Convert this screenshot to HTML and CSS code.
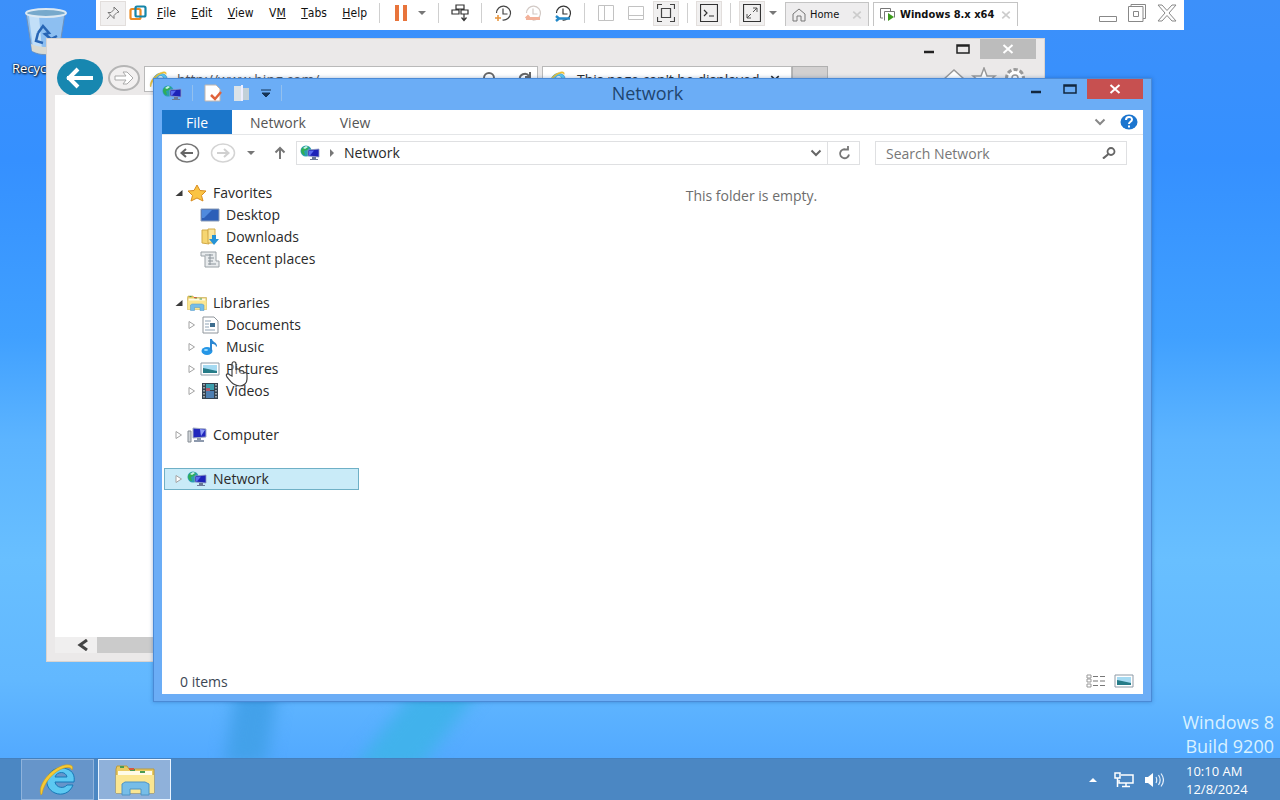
FILE: index.html
```html
<!DOCTYPE html>
<html lang="en">
<head>
    <meta charset="UTF-8">
    <meta name="viewport" content="width=device-width, initial-scale=1.0">
    <title>Windows 8.x x64</title>
    <link rel="stylesheet" href="styles.css">
</head>
<body>
    <!-- Shared icons -->
    <svg class="sprite" aria-hidden="true">
        <symbol id="i-network" viewBox="0 0 20 16">
            <circle cx="6" cy="6" r="5.5" fill="#2a9fb0"/>
            <path d="M1 5c2-4 5-4 8-3L7 5 4 6l1 4C3 10 1 8 1 5z" fill="#2fae57"/>
            <path d="M3 3l3-2 2 1-3 2z" fill="#c9f2ee"/>
            <path d="M8 5l11-1v8l-11-1z" fill="#1d22b8" stroke="#8f9cc0" stroke-width=".8"/>
            <path d="M9 6l5-.5-4 5H9z" fill="#5b6cf0"/>
            <path d="M12 12h4v2h2v1h-8v-1h2z" fill="#6a7896"/>
        </symbol>
        <symbol id="i-ie" viewBox="0 0 40 34">
            <path d="M36 19H17c1 6 9 7 12 3h6c-3 8-11 11-18 8S7 20 10 13 22 3 29 6c6 2 8 7 7 13zM17 14h12c-1-6-10-6-12 0z" fill="#5cc8f2" stroke="#1779b8" stroke-width="1"/>
            <path d="M3 32C-1 22 13 5 27 2c6-1 9 1 7 5-1-3-4-3-8-2C16 8 6 19 4 31z" fill="#f6ca35" stroke="#c99a1a" stroke-width=".6"/>
        </symbol>
        <symbol id="i-folders" viewBox="0 0 40 32">
            <path d="M1 5l1-3h10l2 3h25v24H1z" fill="#eacb62" stroke="#bb9a3c"/>
            <path d="M3 7h34v5H3z" fill="#fffbe6"/>
            <path d="M5 3h4M15 6h5M25 8h5" stroke="#4c9a52" stroke-width="2"/>
            <path d="M14 5h5" stroke="#d9583c" stroke-width="2"/>
            <path d="M1 11h38v18H1z" fill="#fbe691"/>
            <path d="M7 31V20l3-2h20l4 2v11h-8v-6H15v6z" fill="#76bde8" stroke="#4f94c4"/>
        </symbol>
        <symbol id="i-picture" viewBox="0 0 20 16">
            <path d="M1 2h18v12H1z" fill="#fff" stroke="#8d9aa6"/>
            <path d="M3 4h14v8H3z" fill="#a5daf2"/>
            <path d="M3 7l5 1 9 2v2H3z" fill="#267c88"/>
        </symbol>
        <symbol id="i-caret" viewBox="0 0 10 6"><path d="M1 1h8L5 5z" fill="currentColor"/></symbol>
        <symbol id="i-chevron" viewBox="0 0 12 8"><path d="M1.500 1.500L6 6l4.500-4.500" fill="none" stroke="currentColor" stroke-width="2"/></symbol>
        <symbol id="i-close" viewBox="0 0 12 10"><path d="M1.500 1l9 8M10.500 1l-9 8" fill="none" stroke="currentColor" stroke-width="2"/></symbol>
        <symbol id="i-max" viewBox="0 0 14 10"><path d="M1 1h12v8H1zM1 2h12" fill="none" stroke="currentColor" stroke-width="1.500"/></symbol>
        <symbol id="i-min" viewBox="0 0 14 10"><path d="M2 8h10" stroke="currentColor" stroke-width="2.500"/></symbol>
        <symbol id="i-clock" viewBox="0 0 18 18"><path d="M2.500 9a7 7 0 1 1 6 7M9 4.500V10h4.500" fill="none" stroke="currentColor" stroke-width="1.200"/></symbol>
        <symbol id="i-closed" viewBox="0 0 8 10"><path d="M1 1.500v7L6.500 5z" fill="#fff" stroke="#a3a3a3"/></symbol>
        <symbol id="i-open" viewBox="0 0 8 8"><path d="M7.500 1v6H.5z" fill="#3b3b3b"/></symbol>
    </svg>

    <div class="desktop">
        <svg class="wallpaper" viewBox="0 0 1280 800" preserveAspectRatio="none" aria-hidden="true">
            <path d="M236 690h42l-12 75h-42z" fill="#43a1ea"/>
            <path d="M414 690h66l-62 80h-66z" fill="#41b2ec"/>
        </svg>

        <div class="desktop-icon">
            <svg width="44" height="50" viewBox="0 0 44 50">
                <path d="M2 6l6 38c7 5 20 5 27 0l6-38z" fill="#9cc8ee" fill-opacity=".85" stroke="#7192b8"/>
                <path d="M5 9h10l3 34-9-2z" fill="#d8edfb" fill-opacity=".7"/>
                <ellipse cx="22" cy="6" rx="20" ry="4" fill="#77a9cc" stroke="#dce9f3" stroke-width="2"/>
                <path d="M14 26l5-7 6 7-4 1 6 5 6-3M14 26l-2 8 7 2" fill="none" stroke="#2765b5" stroke-width="2.500"/>
                <path d="M7 37c9 4 19 4 28 0l-1 7c-8 4-18 4-26 0z" fill="#d9dad2"/>
            </svg>
            <span>Recycle Bin</span>
        </div>

        <!-- Internet Explorer, behind -->
        <section class="ie-window">
            <div class="window-controls ie-controls">
                <button type="button" class="win-btn" aria-label="Minimize"><svg width="14" height="10"><use href="#i-min"/></svg></button>
                <button type="button" class="win-btn" aria-label="Maximize"><svg width="14" height="10"><use href="#i-max"/></svg></button>
                <button type="button" class="win-btn win-close" aria-label="Close"><svg width="12" height="10"><use href="#i-close"/></svg></button>
            </div>
            <div class="ie-bar">
                <button type="button" class="ie-back" aria-label="Back"><svg width="30" height="24" viewBox="0 0 30 24"><path d="M2 12h26M13 3L4 12l9 9" fill="none" stroke="#fff" stroke-width="4"/></svg></button>
                <button type="button" class="ie-forward" aria-label="Forward"><svg width="34" height="28" viewBox="0 0 34 28"><ellipse cx="17" cy="14" rx="15" ry="12" fill="#f2f0f0" stroke="#b5b5b5" stroke-width="2"/><path d="M8 12h11l-3-4h4l6 6-6 6h-4l3-4H8z" fill="#fff" stroke="#aaa"/></svg></button>
                <div class="ie-address">
                    <svg width="20" height="17"><use href="#i-ie"/></svg>
                    <input type="text" value="http://www.bing.com/" aria-label="Address">
                    <svg width="16" height="16" viewBox="0 0 16 16"><circle cx="8" cy="7" r="5" fill="none" stroke="#666" stroke-width="2"/></svg>
                    <svg width="16" height="16" viewBox="0 0 16 16"><path d="M3 9a5 5 0 0 1 9-4M13 1v5H8" fill="none" stroke="#666" stroke-width="2"/></svg>
                </div>
                <div class="ie-tab"><svg width="20" height="17"><use href="#i-ie"/></svg><span>This page can't be displayed</span><svg width="10" height="9"><use href="#i-close"/></svg></div>
                <button type="button" class="ie-newtab" aria-label="New tab"></button>
                <svg class="ie-tools" width="84" height="24" viewBox="0 0 84 24" fill="#fff" stroke="#999" stroke-width="1.500">
                    <path d="M2 12L12 3l10 9h-3v9H5v-9z"/>
                    <path d="M42 1l3 8h8l-6 5 2 8-7-5-7 5 2-8-6-5h8z"/>
                    <circle cx="73" cy="11" r="8" stroke-dasharray="4 2" stroke-width="4"/><circle cx="73" cy="11" r="7" stroke="none"/><circle cx="73" cy="11" r="3"/>
                </svg>
            </div>
            <div class="ie-page"></div>
            <div class="ie-scroll"><svg width="12" height="12" viewBox="0 0 12 12"><path d="M10 1L3 6l7 5" fill="none" stroke="#444" stroke-width="3"/></svg><span class="ie-thumb"></span></div>
        </section>

        <!-- File Explorer -->
        <section class="explorer">
            <header class="titlebar">
                <div class="quick">
                    <svg width="20" height="16"><use href="#i-network"/></svg>
                    <span class="bar"></span>
                    <button type="button" aria-label="Properties"><svg width="20" height="18" viewBox="0 0 20 18"><path d="M2 1h11l4 4v12H2z" fill="#fff" stroke="#c4b7ad"/><path d="M8 11l4 4 6-7" fill="none" stroke="#e0633c" stroke-width="2.500"/></svg></button>
                    <button type="button" aria-label="New folder"><svg width="18" height="18" viewBox="0 0 18 18"><path d="M1 2h8v15H1z" fill="#dbe3e8"/><path d="M9 4h7v12H9z" fill="#c2d0d8"/><path d="M9 1v16" stroke="#eef" stroke-width="2"/></svg></button>
                    <button type="button" aria-label="Customize"><svg width="10" height="8" viewBox="0 0 10 8"><path d="M0 1h10M1 4h8L5 8z" fill="#173456" stroke="#173456"/></svg></button>
                    <span class="bar"></span>
                </div>
                <h1>Network</h1>
                <div class="window-controls">
                    <button type="button" class="win-btn" aria-label="Minimize"><svg width="14" height="10"><use href="#i-min"/></svg></button>
                    <button type="button" class="win-btn" aria-label="Maximize"><svg width="14" height="10"><use href="#i-max"/></svg></button>
                    <button type="button" class="win-btn win-close" aria-label="Close"><svg width="12" height="10"><use href="#i-close"/></svg></button>
                </div>
            </header>

            <div class="client">
                <div class="ribbon">
                    <button type="button" class="ribbon-file">File</button>
                    <button type="button" class="ribbon-tab">Network</button>
                    <button type="button" class="ribbon-tab">View</button>
                    <button type="button" class="ribbon-expand" aria-label="Expand the ribbon"><svg width="12" height="8"><use href="#i-chevron"/></svg></button>
                    <button type="button" aria-label="Help"><svg width="18" height="16" viewBox="0 0 18 16"><ellipse cx="9" cy="8" rx="8.500" ry="7.500" fill="#1b75cf"/><path d="M6 6c0-4 6-4 6-.5C12 8 9 7.500 9 10M9 11.500v2" fill="none" stroke="#fff" stroke-width="2"/></svg></button>
                </div>

                <div class="address-row">
                    <button type="button" aria-label="Back"><svg width="26" height="20" viewBox="0 0 26 20"><ellipse cx="13" cy="10" rx="11.500" ry="9" fill="none" stroke="#777" stroke-width="1.500"/><path d="M7 10h12M12 6l-4.500 4 4.500 4" fill="none" stroke="#666" stroke-width="2"/></svg></button>
                    <button type="button" aria-label="Forward"><svg width="26" height="20" viewBox="0 0 26 20"><ellipse cx="13" cy="10" rx="11.500" ry="9" fill="none" stroke="#d4d4d4" stroke-width="1.500"/><path d="M7 10h12M14 6l4.500 4-4.500 4" fill="none" stroke="#d0d0d0" stroke-width="2"/></svg></button>
                    <button type="button" class="recent" aria-label="Recent locations"><svg width="10" height="6"><use href="#i-caret"/></svg></button>
                    <button type="button" class="up" aria-label="Up"><svg width="12" height="14" viewBox="0 0 12 14"><path d="M6 13V2M1.500 6.500L6 2l4.500 4.500" fill="none" stroke="#777" stroke-width="2"/></svg></button>
                    <div class="address">
                        <svg width="20" height="16"><use href="#i-network"/></svg>
                        <svg width="6" height="8" viewBox="0 0 6 8"><path d="M1 0v8l4-4z" fill="#777"/></svg>
                        <span class="crumb">Network</span>
                        <button type="button" aria-label="Previous locations"><svg width="12" height="8"><use href="#i-chevron"/></svg></button>
                        <button type="button" class="refresh" aria-label="Refresh"><svg width="14" height="14" viewBox="0 0 14 14"><path d="M9 3.500a4.500 4.500 0 1 0 3 5M6 3.500h5V0" fill="none" stroke="#777" stroke-width="1.800"/></svg></button>
                    </div>
                    <label class="search">
                        <input type="search" placeholder="Search Network" aria-label="Search Network">
                        <svg width="14" height="12" viewBox="0 0 14 12"><circle cx="9" cy="4.500" r="3.500" fill="none" stroke="#666" stroke-width="1.800"/><path d="M6.500 7L1 11.500" stroke="#666" stroke-width="2.200"/></svg>
                    </label>
                </div>

                <div class="panes">
                    <nav class="tree">
                        <ul>
                            <li><svg class="twist" width="8" height="8"><use href="#i-open"/></svg><svg width="20" height="18" viewBox="0 0 20 18"><path d="M10 1l3 5.500 6 .5-4.500 4.500L16 17l-6-3-6 3 1.500-5.500L1 7l6-.5z" fill="#fbc444" stroke="#d98d22"/></svg><a href="#">Favorites</a></li>
                            <li class="child"><svg width="20" height="16" viewBox="0 0 20 16"><path d="M1 2h18v12H1z" fill="#2c5fb8" stroke="#8b9db8"/><path d="M2 3h10l-8 8H2z" fill="#4f8add"/></svg><a href="#">Desktop</a></li>
                            <li class="child"><svg width="20" height="18" viewBox="0 0 20 18"><path d="M2 2h6l1 14-7-1z" fill="#f6d672" stroke="#d2aa48"/><path d="M8 1h7v14H8z" fill="#fbe59b" stroke="#d2aa48"/><path d="M12 7h4v4h3l-5 6-5-6h3z" fill="#2693d6"/></svg><a href="#">Downloads</a></li>
                            <li class="child"><svg width="20" height="18" viewBox="0 0 20 18"><path d="M1 2h15v9h3v6H5V6H1z" fill="#e8ebed" stroke="#9aa1a6"/><path d="M5 5h8M8 8h6M8 11h5M8 14h8M10 4v11" stroke="#8b949b"/></svg><a href="#">Recent places</a></li>
                        </ul>
                        <ul>
                            <li><svg class="twist" width="8" height="8"><use href="#i-open"/></svg><svg width="20" height="16"><use href="#i-folders"/></svg><a href="#">Libraries</a></li>
                            <li class="child"><svg class="twist" width="8" height="10"><use href="#i-closed"/></svg><svg width="20" height="18" viewBox="0 0 20 18"><path d="M3 1h11l4 4v12H3z" fill="#fff" stroke="#8f959b"/><path d="M5 5h6M5 8h4M5 11h4M5 14h10" stroke="#8fa3b5"/><path d="M10 7h5v4h-5z" fill="#3d6d8e"/></svg><a href="#">Documents</a></li>
                            <li class="child"><svg class="twist" width="8" height="10"><use href="#i-closed"/></svg><svg width="20" height="18" viewBox="0 0 20 18"><ellipse cx="7" cy="13" rx="5.500" ry="4" fill="#2596e6"/><path d="M10 13V1h2c0 3 5 3 5 7l-1 1c0-3-3-3-4-3v7z" fill="#2a86d2"/><ellipse cx="6" cy="12" rx="2" ry="1" fill="#9bdcff"/></svg><a href="#">Music</a></li>
                            <li class="child"><svg class="twist" width="8" height="10"><use href="#i-closed"/></svg><svg width="20" height="16"><use href="#i-picture"/></svg><a href="#">Pictures</a></li>
                            <li class="child"><svg class="twist" width="8" height="10"><use href="#i-closed"/></svg><svg width="20" height="18" viewBox="0 0 20 18"><path d="M2 1h16v16H2z" fill="#34424f"/><path d="M6 2h8v6H6z" fill="#3d9fae"/><path d="M6 9h8v7H6z" fill="#4e7fb2"/><path d="M6 6h4v3H6z" fill="#b05a68"/><path d="M4 2v14M16 2v14" stroke="#bcc6cd" stroke-width="1.500" stroke-dasharray="1.500 1.500"/></svg><a href="#">Videos</a></li>
                        </ul>
                        <ul>
                            <li><svg class="twist" width="8" height="10"><use href="#i-closed"/></svg><svg width="20" height="16" viewBox="0 0 20 16"><path d="M1 4h3v11H1z" fill="#d0d4d8" stroke="#868d94"/><path d="M6 1l13 1v8l-13 1z" fill="#2228bd" stroke="#a3adc4"/><path d="M13 2l5 1-4 6z" fill="#8c9cf5"/><path d="M10 11h4v2h3v2H7v-2h3z" fill="#8d99ad"/></svg><a href="#">Computer</a></li>
                        </ul>
                        <ul>
                            <li class="selected"><svg class="twist" width="8" height="10"><use href="#i-closed"/></svg><svg width="20" height="16"><use href="#i-network"/></svg><a href="#">Network</a></li>
                        </ul>
                    </nav>
                    <main class="files"><p>This folder is empty.</p></main>
                </div>

                <footer class="status">
                    <span>0 items</span>
                    <button type="button" aria-label="Details view"><svg width="20" height="14" viewBox="0 0 20 14"><path d="M1 1h4v3H1zM1 5h4v3H1zM1 10h4v3H1z" fill="none" stroke="#999"/><path d="M7 2.500h5M14 2.500h5M7 7h5M14 7h5M7 11.500h5M14 11.500h5" stroke="#777"/></svg></button>
                    <button type="button" aria-label="Large icons view"><svg width="20" height="16"><use href="#i-picture"/></svg></button>
                </footer>
            </div>
        </section>

        <!-- Virtual machine toolbar -->
        <header class="vm-bar">
            <button type="button" class="tool framed" aria-label="Pin"><svg width="14" height="14" viewBox="0 0 14 14"><path d="M8 1l5 5-2 .5-3 3v3L2 6.500h3l3-3zM4.500 9L1 13" fill="none" stroke="#777"/></svg></button>
            <svg class="vm-logo" width="18" height="16" viewBox="0 0 18 16" fill="none" stroke-width="2.200"><rect x="1.500" y="4" width="10" height="10" rx="1.500" stroke="#ed8b22"/><rect x="6.500" y="1.500" width="10" height="10" rx="1.500" stroke="#1585a8"/></svg>
            <nav class="menu">
                <button type="button"><u>F</u>ile</button>
                <button type="button"><u>E</u>dit</button>
                <button type="button"><u>V</u>iew</button>
                <button type="button">V<u>M</u></button>
                <button type="button"><u>T</u>abs</button>
                <button type="button"><u>H</u>elp</button>
            </nav>
            <span class="sep"></span>
            <div class="tools">
                <button type="button" class="tool" aria-label="Suspend"><svg width="14" height="16" viewBox="0 0 14 16"><path d="M1 0h4v16H1zM9 0h4v16H9z" fill="#e8743b"/></svg></button>
                <button type="button" class="drop" aria-label="Power options"><svg width="10" height="6"><use href="#i-caret"/></svg></button>
            </div>
            <span class="sep"></span>
            <button type="button" class="tool" aria-label="Send Ctrl+Alt+Del"><svg width="18" height="18" viewBox="0 0 18 18"><path d="M5 1h8v4H5zM1 6h7v4H1zM10 6h7v4h-7zM13 10v6M10.500 13.500L13 16.500l2.500-3" fill="none" stroke="#333" stroke-width="1.200"/></svg></button>
            <span class="sep"></span>
            <div class="tools">
                <button type="button" class="tool" aria-label="Take snapshot"><svg width="18" height="18" viewBox="0 0 18 18" color="#444"><use href="#i-clock"/><path d="M4 11v6M1 14h6" stroke="#e8943b" stroke-width="1.500"/></svg></button>
                <button type="button" class="tool" aria-label="Revert snapshot"><svg width="18" height="18" viewBox="0 0 18 18" color="#d2c9c5"><use href="#i-clock"/><path d="M2 14.500h14M5 11.500l-3 3" stroke="#f3b29a" stroke-width="3"/></svg></button>
                <button type="button" class="tool" aria-label="Manage snapshots"><svg width="18" height="18" viewBox="0 0 18 18" color="#333"><use href="#i-clock"/><path d="M2 12l3 2.500h11M2 17l3-2.500" fill="none" stroke="#2489c9" stroke-width="2.500"/></svg></button>
            </div>
            <span class="sep"></span>
            <div class="tools">
                <button type="button" class="tool" aria-label="Show library"><svg width="16" height="16" viewBox="0 0 16 16"><path d="M.5.5h15v15H.5zM6.500 1v14" fill="none" stroke="#c2c2c2"/></svg></button>
                <button type="button" class="tool" aria-label="Show thumbnails"><svg width="16" height="16" viewBox="0 0 16 16"><path d="M.5 1.500h15v13H.5zM1 10.500h14" fill="none" stroke="#c2c2c2"/></svg></button>
                <button type="button" class="tool framed" aria-label="Full screen"><svg width="18" height="18" viewBox="0 0 18 18"><path d="M.5 5V.5H5M13 .5h4.500V5M17.500 13v4.500H13M5 17.500H.5V13M4.500 4.500h9v9h-9z" fill="none" stroke="#444" stroke-width="1.200"/></svg></button>
            </div>
            <span class="sep"></span>
            <button type="button" class="tool framed" aria-label="Console view"><svg width="18" height="18" viewBox="0 0 18 18"><path d="M.5.5h17v17H.5zM4 6l3 3-3 3M9 12h5" fill="none" stroke="#333" stroke-width="1.200"/></svg></button>
            <span class="sep"></span>
            <div class="tools">
                <button type="button" class="tool framed" aria-label="Stretch guest"><svg width="18" height="18" viewBox="0 0 18 18"><path d="M.5.5h17v17H.5z" fill="none" stroke="#333" stroke-width="1.200"/><path d="M4 14l4-4M10 8l4-4M10 4h4v4M4 10v4h4" fill="none" stroke="#555"/></svg></button>
                <button type="button" class="drop" aria-label="Stretch options"><svg width="10" height="6"><use href="#i-caret"/></svg></button>
            </div>
            <div class="vm-tabs">
                <div class="vm-tab vm-home"><svg width="14" height="14" viewBox="0 0 14 14"><path d="M1 6l6-5 6 5v7H9V8H5v5H1z" fill="none" stroke="#777"/></svg><a href="#">Home</a><svg class="tab-x" width="10" height="10"><use href="#i-close"/></svg></div>
                <div class="vm-tab vm-active"><svg width="16" height="14" viewBox="0 0 16 14"><path d="M3 10H.5V.5h10V3M4.500 12.500v-9h10v6" fill="none" stroke="#777"/><path d="M8 5v8l6-4z" fill="#3c9a1c"/></svg><a href="#">Windows 8.x x64</a><svg class="tab-x" width="10" height="10"><use href="#i-close"/></svg></div>
            </div>
            <div class="vm-controls">
                <button type="button" aria-label="Minimize"><svg width="18" height="18" viewBox="0 0 18 18"><path d="M.5 12.500h17v5H.5z" fill="#fff" stroke="#888"/></svg></button>
                <button type="button" aria-label="Restore"><svg width="18" height="18" viewBox="0 0 18 18"><path d="M3 2.500V.5h14.500v14H15M.5 2.500H15v15H.5zM5.500 7.500h5v5h-5z" fill="none" stroke="#888"/></svg></button>
                <button type="button" aria-label="Close"><svg width="20" height="18" viewBox="0 0 20 18"><path d="M1 1h4l5 5.500L15 1h4l-7 8 7 8h-4l-5-5.500L5 17H1l7-8z" fill="#fff" stroke="#888"/></svg></button>
            </div>
        </header>

        <p class="watermark">Windows 8<br>Build 9200</p>

        <footer class="taskbar">
            <button type="button" class="task" aria-label="Internet Explorer"><svg width="40" height="34"><use href="#i-ie"/></svg></button>
            <button type="button" class="task task-active" aria-label="File Explorer"><svg width="42" height="32"><use href="#i-folders"/></svg></button>
            <div class="tray">
                <svg class="tray-more" width="10" height="6" viewBox="0 0 10 6"><path d="M1 5h8L5 1z" fill="#fff"/></svg>
                <svg width="20" height="16" viewBox="0 0 20 16" fill="none" stroke="#fff" stroke-width="1.500"><path d="M7 3h12v8H5V8M12 11v3M8 14.500h8"/><path d="M1 1h5v5H1zM3.500 6v9"/></svg>
                <svg width="20" height="16" viewBox="0 0 20 16"><path d="M1 5h3l5-4v14l-5-4H1z" fill="#fff"/><path d="M12 5c1 2 1 4 0 6M14.500 3c2 3 2 7 0 10M17 1.500c3 4 3 9 0 13" fill="none" stroke="#e3eefa" stroke-width="1.200"/></svg>
            </div>
            <p class="clock">10:10 AM<br>12/8/2024</p>
        </footer>

        <svg class="cursor" width="24" height="28" viewBox="0 0 24 28" aria-hidden="true"><path d="M7 16V4c0-3 4-3 4 0v6c1-2 4-1 4 1 2-1 4 0 4 2 2-1 3 0 3 2v4c0 4-3 7-7 7-6 0-8-3-13-9-2-3 1-4 3-2z" fill="#fff" fill-opacity=".4" stroke="#444" stroke-width="1.200"/></svg>
    </div>
</body>
</html>
```

FILE: styles.css
```css
* {
    box-sizing: border-box;
}

body {
    margin: 0;
    font-family: "Open Sans", "Noto Sans", sans-serif;
    font-size: 14px;
    color: #2a2a2a;
}

button {
    display: flex;
    align-items: center;
    justify-content: center;
    padding: 0;
    border: none;
    background: none;
    font: inherit;
    color: inherit;
}

svg {
    display: block;
    flex: none;
}

a {
    color: inherit;
    text-decoration: none;
}

p,
h1,
ul {
    margin: 0;
    padding: 0;
    font-weight: normal;
}

.sprite {
    position: absolute;
    width: 0;
    height: 0;
}

.desktop {
    position: relative;
    height: 100vh;
    overflow: hidden;
    background: linear-gradient(#3c90fa 0%, #3590ff 20%, #40a0ff 42%, #5cb4ff 55%, #68bfff 70%, #62b8ff 85%, #52a9ff 95%);
}

.wallpaper {
    position: absolute;
    width: 100%;
    height: 100%;
    filter: blur(8px);
}

.desktop-icon {
    position: absolute;
    top: 7px;
    left: 8px;
    width: 76px;
    display: flex;
    flex-direction: column;
    align-items: center;
    font-size: 13px;
    line-height: 22px;
    color: white;
    white-space: nowrap;
    text-shadow: 1px 1px 2px black, 0 0 2px black;
}

/* Internet Explorer */
.ie-window {
    position: absolute;
    top: 38px;
    left: 46px;
    right: 235px;
    bottom: 138px;
    display: flex;
    flex-direction: column;
    padding: 0 8px 8px;
    background: #ebe9e9;
    border: 1px solid #d9d4d0;
}

.window-controls {
    display: flex;
    color: #12273f;
}

.win-btn {
    width: 34px;
    height: 20px;
}

.win-close {
    width: 56px;
    color: white;
    background: #c75050;
}

.ie-controls {
    justify-content: flex-end;
    color: #222;
}

.ie-controls .win-close {
    background: #bcbcbc;
}

.ie-bar {
    display: flex;
    height: 36px;
    overflow: hidden;
    align-items: flex-start;
}

.ie-back {
    width: 46px;
    height: 38px;
    margin: 0 4px 0 2px;
    border-radius: 50%;
    background: #1787b0;
    flex: none;
}

.ie-forward {
    margin: 5px 3px 0 0;
}

.ie-address,
.ie-tab {
    display: flex;
    align-items: center;
    gap: 10px;
    height: 26px;
    margin-top: 7px;
    padding: 0 4px;
    border: 1px solid #b9b9b9;
    background: white;
}

.ie-address {
    flex: 0 1 394px;
    gap: 20px;
}

.ie-address input {
    flex: 1;
    min-width: 0;
    border: none;
    padding: 0;
    font: inherit;
    color: #555;
    margin-left: -12px;
}

.ie-tab {
    flex: 0 1 250px;
    margin-left: 4px;
    white-space: nowrap;
}

.ie-newtab {
    width: 36px;
    height: 26px;
    margin-top: 7px;
    border: 1px solid #b0b0b0;
    background: #d2d0d0;
    flex: none;
}

.ie-tools {
    margin: 8px 10px 0 auto;
}

.ie-page {
    flex: 1;
    background: white;
}

.ie-scroll {
    display: flex;
    align-items: center;
    height: 16px;
    gap: 8px;
    padding-left: 22px;
    background: #f0efef;
}

.ie-thumb {
    flex: 1;
    height: 16px;
    background: #cbcbcb;
}

/* Explorer window */
.explorer {
    position: absolute;
    top: 78px;
    left: 153px;
    right: 128px;
    bottom: 98px;
    display: flex;
    flex-direction: column;
    padding: 0 8px 7px;
    background: #6badf6;
    border: 1px solid #4a8ad6;
    box-shadow: 0 0 4px rgba(20, 70, 140, 0.4);
}

.titlebar {
    display: grid;
    grid-template-columns: 1fr auto 1fr;
    height: 31px;
}

.titlebar h1 {
    padding: 2px 10px 0 0;
    font-size: 18px;
    line-height: 24px;
    color: #1f456f;
}

.titlebar .window-controls {
    justify-content: flex-end;
}

.quick {
    display: flex;
    align-items: center;
    gap: 10px;
    height: 28px;
}

.quick .bar {
    width: 1px;
    height: 16px;
    background: #93c0ee;
}

.client {
    flex: 1;
    display: flex;
    flex-direction: column;
    min-height: 0;
    background: white;
}

.ribbon {
    display: flex;
    height: 25px;
    padding-right: 5px;
    border-bottom: 1px solid #e4e6e8;
    color: #555;
}

.ribbon-file {
    width: 70px;
    color: white;
    background: #1b76ca;
}

.ribbon-tab {
    padding: 0 16px 0 18px;
}

.ribbon-expand {
    margin-left: auto;
    margin-right: 14px;
    color: #888;
}

.address-row {
    display: flex;
    align-items: center;
    height: 36px;
    padding: 0 16px 0 12px;
}

.address-row button + button {
    margin-left: 10px;
}

.address-row .recent {
    color: #777;
}

.address-row button + .up {
    margin: 0 10px 0 18px;
}

.address,
.search {
    display: flex;
    align-items: center;
    height: 24px;
    border: 1px solid #dfe0e2;
}

.address {
    flex: 1;
    gap: 9px;
    padding-left: 3px;
    color: #666;
}

.address .crumb {
    flex: 1;
    line-height: 20px;
    color: #2a2a2a;
}

.address .refresh {
    width: 32px;
    height: 22px;
    border-left: 1px solid #dfe0e2;
}

.address-row .address .refresh {
    margin-left: -4px;
}

.search {
    flex: 0 1 252px;
    margin-left: 15px;
    padding: 0 10px;
}

.search input {
    flex: 1;
    min-width: 0;
    padding: 0;
    border: none;
    background: none;
    font: inherit;
}

.search input::placeholder {
    color: #777;
}

.panes {
    flex: 1;
    display: flex;
    min-height: 0;
}

.tree {
    display: flex;
    flex-direction: column;
    gap: 22px;
    width: 198px;
    padding: 11px 1px 0 2px;
    overflow: hidden;
}

.tree li {
    display: flex;
    align-items: center;
    height: 22px;
    padding-left: 11px;
    line-height: 20px;
    white-space: nowrap;
}

.tree li svg {
    margin-right: 6px;
}

.tree li .twist {
    margin-right: 4px;
}

.tree .child {
    padding-left: 24px;
}

.tree .child > svg:first-child:not(.twist) {
    margin-left: 12px;
}

.tree .selected {
    padding-left: 10px;
    background: #c9ebf8;
    border: 1px solid #6fb0c6;
}

.files {
    flex: 1;
    padding-top: 15px;
    text-align: center;
    line-height: 20px;
    color: #6d6d6d;
}

.status {
    display: flex;
    align-items: center;
    gap: 8px;
    height: 26px;
    padding: 0 9px 0 18px;
    color: #3c4654;
}

.status span {
    flex: 1;
}

/* Toolbar of the virtual machine */
.vm-bar {
    position: absolute;
    top: 0;
    left: 96px;
    right: 96px;
    display: flex;
    align-items: center;
    height: 30px;
    padding: 0 7px 4px 4px;
    background: white;
    font-family: "DejaVu Sans Condensed", "DejaVu Sans", sans-serif;
    font-size: 11px;
    color: #111;
}

.tool {
    width: 26px;
    height: 25px;
}

.tools {
    display: flex;
    align-items: center;
    gap: 4px;
}

.framed {
    background: #f1f0f0;
    border: 1px solid #e2dedc;
}

.vm-logo {
    margin-left: 3px;
}

.menu {
    display: flex;
    justify-content: space-between;
    width: 210px;
    margin: 0 4px 0 10px;
    font-size: 12px;
}

.sep {
    width: 1px;
    height: 20px;
    margin: 0 8px;
    background: #cfcfcf;
}

.drop {
    width: 12px;
    height: 25px;
    margin: 0 2px 0 -2px;
    color: #777;
}

.vm-tabs {
    display: flex;
    align-self: flex-end;
    gap: 4px;
    margin-left: 4px;
}

.vm-tab {
    display: flex;
    align-items: center;
    gap: 4px;
    height: 24px;
    padding: 0 6px;
    border: 1px solid #c4c4c4;
    border-bottom: none;
    white-space: nowrap;
}

.vm-home {
    width: 84px;
    background: #eeedee;
}

.vm-active {
    width: 145px;
    font-weight: bold;
}

.tab-x {
    margin-left: auto;
    color: #ccc;
}

.vm-controls {
    display: flex;
    gap: 11px;
    margin-left: auto;
}

/* Bottom right texts and the taskbar */
.watermark {
    position: absolute;
    right: 6px;
    bottom: 42px;
    font-size: 18px;
    line-height: 24px;
    text-align: right;
    color: #d8f1ff;
}

.taskbar {
    position: absolute;
    left: 0;
    right: 0;
    bottom: 0;
    display: flex;
    align-items: center;
    gap: 4px;
    height: 42px;
    padding-left: 21px;
    background: #4b87c3;
    border-top: 1px solid #4580bd;
    color: white;
}

.task {
    width: 73px;
    height: 41px;
    border: 1px solid #8fb3dc;
    background: #6695ca;
}

.task-active {
    border: 1px solid #e8f3ff;
    background: #8fb1da;
}

.tray {
    display: flex;
    align-items: center;
    gap: 10px;
    margin-left: auto;
}

.tray-more {
    margin-right: 6px;
}

.clock {
    width: 94px;
    margin-left: 18px;
    font-size: 13px;
    line-height: 18px;
}

.cursor {
    position: absolute;
    top: 360px;
    left: 225px;
}
```
